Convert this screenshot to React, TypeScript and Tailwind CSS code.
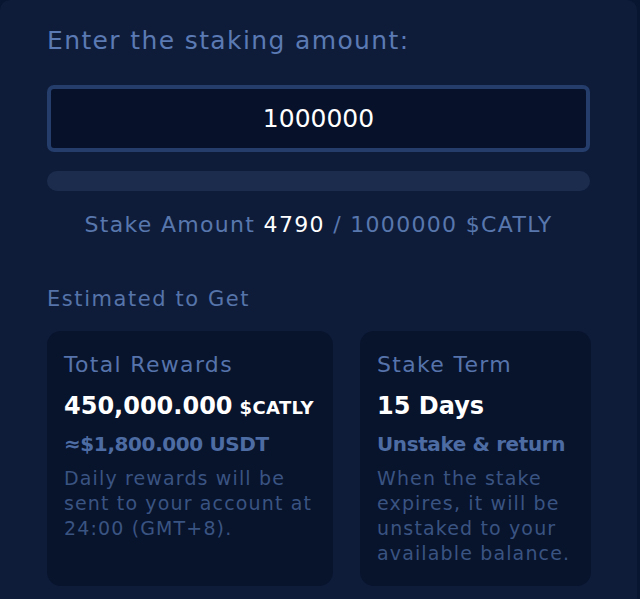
import React from 'react';

// Staking amount panel — input, progress, and the two estimate cards.

const font = { fontFamily: '"DejaVu Sans", "Noto Sans", sans-serif' };

function InfoCard({
  label,
  value,
  unit,
  sub,
  note,
}: {
  label: string;
  value: string;
  unit?: string;
  sub: string;
  note: string;
}) {
  return (
    <div className="rounded-[14px] bg-[#08132c] px-[17px] pt-[19px] pb-4">
      <p className="text-[22px] leading-[30px] tracking-[0.06em] text-[#5674ab]">{label}</p>
      <p className="mt-[10px] leading-[32px] text-white">
        <span className="text-[24px] font-bold">{value}</span>
        {unit && <span className="ml-[7px] text-[18px] font-bold tracking-[0.02em]">{unit}</span>}
      </p>
      <p className="mt-[4px] text-[20px] font-bold leading-[30px] tracking-[-0.02em] text-[#4d6ca3]">
        {sub}
      </p>
      <p className="mt-[7px] text-[19px] leading-[25px] tracking-[0.06em] text-[#3a5482]">{note}</p>
    </div>
  );
}

export default function App() {
  return (
    <div className="h-[599px] w-[640px] overflow-hidden bg-[#091631]" style={font}>
      <div className="h-full w-[637px] rounded-tl-[10px] rounded-tr-[10px] bg-[#0e1c3a] px-[47px] pt-[24px]">
        <h2 className="text-[25px] leading-[34px] tracking-[0.055em] text-[#5b7ab3]">
          Enter the staking amount:
        </h2>

        <div className="mt-[27px] flex h-[67px] items-center justify-center rounded-[7px] border-4 border-[#243d6b] bg-[#07112a]">
          <span className="text-[25px] text-white">1000000</span>
        </div>

        <div className="mt-[19px] h-[20px] rounded-full bg-[#1c2c4d]" />

        <p className="mt-[19px] text-center text-[22px] leading-[30px] tracking-[0.06em] text-[#5877ad]">
          Stake Amount <span className="text-white">4790</span> / 1000000 $CATLY
        </p>

        <p className="mt-[45px] text-[21px] leading-[28px] tracking-[0.075em] text-[#5674a9]">
          Estimated to Get
        </p>

        <div className="mt-[18px] grid h-[255px] grid-cols-[286px_231px] gap-[27px]">
          <InfoCard
            label="Total Rewards"
            value="450,000.000"
            unit="$CATLY"
            sub="≈$1,800.000 USDT"
            note="Daily rewards will be sent to your account at 24:00 (GMT+8)."
          />
          <InfoCard
            label="Stake Term"
            value="15 Days"
            sub="Unstake & return"
            note="When the stake expires, it will be unstaked to your available balance."
          />
        </div>
      </div>
    </div>
  );
}
